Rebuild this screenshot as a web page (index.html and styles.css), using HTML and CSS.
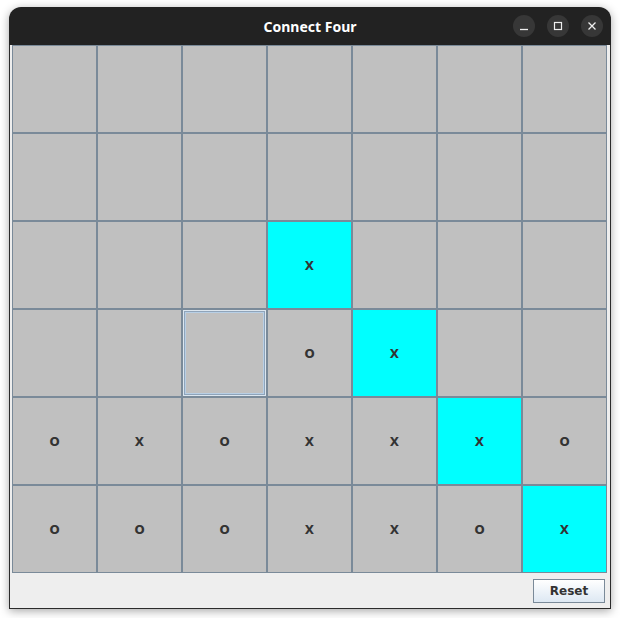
FILE: index.html
```html
<!DOCTYPE html>
<html>
<head>
<meta charset="utf-8">
<title>Connect Four</title>
<link rel="stylesheet" href="styles.css">
</head>
<body>
<div class="window">
  <div class="titlebar">
    <div class="title">Connect Four</div>
    <div class="controls">
      <div class="ctl"><svg width="10" height="10" viewBox="0 0 10 10"><path d="M1 8.5H9" stroke="#eee" stroke-width="1.3"/></svg></div>
      <div class="ctl"><svg width="10" height="10" viewBox="0 0 10 10"><rect x="1.5" y="1.5" width="7" height="7" fill="none" stroke="#eee" stroke-width="1.2"/></svg></div>
      <div class="ctl"><svg width="10" height="10" viewBox="0 0 10 10"><path d="M1.5 1.5L8.5 8.5M8.5 1.5L1.5 8.5" stroke="#eee" stroke-width="1.3"/></svg></div>
    </div>
  </div>
  <div class="content">
    <div class="board">
      <div class="cell"></div><div class="cell"></div><div class="cell"></div><div class="cell"></div><div class="cell"></div><div class="cell"></div><div class="cell"></div>
      <div class="cell"></div><div class="cell"></div><div class="cell"></div><div class="cell"></div><div class="cell"></div><div class="cell"></div><div class="cell"></div>
      <div class="cell"></div><div class="cell"></div><div class="cell"></div><div class="cell win">X</div><div class="cell"></div><div class="cell"></div><div class="cell"></div>
      <div class="cell"></div><div class="cell"></div><div class="cell focus"></div><div class="cell">O</div><div class="cell win">X</div><div class="cell"></div><div class="cell"></div>
      <div class="cell">O</div><div class="cell">X</div><div class="cell">O</div><div class="cell">X</div><div class="cell">X</div><div class="cell win">X</div><div class="cell">O</div>
      <div class="cell">O</div><div class="cell">O</div><div class="cell">O</div><div class="cell">X</div><div class="cell">X</div><div class="cell">O</div><div class="cell win">X</div>
    </div>
    <div class="footer">
      <button class="reset">Reset</button>
    </div>
  </div>
</div>
</body>
</html>
```
FILE: styles.css
```css
html, body {
  margin: 0;
  padding: 0;
  background: #ffffff;
}
body {
  width: 620px;
  height: 618px;
  overflow: hidden;
}
.window {
  margin: 7px 0 0 9px;
  width: 602px;
  border-radius: 12px 12px 0 0;
  box-shadow: 0 2px 10px rgba(0,0,0,0.35);
  background: #eeeeee;
}
.titlebar {
  height: 38px;
  background: #222222;
  border-radius: 12px 12px 0 0;
  display: flex;
  align-items: center;
  justify-content: center;
  position: relative;
}
.title {
  color: #ffffff;
  font-family: "Noto Sans", "DejaVu Sans", sans-serif;
  font-weight: bold;
  font-size: 14px;
  letter-spacing: 0;
}
.controls {
  position: absolute;
  right: 8px;
  top: 8px;
  display: flex;
  gap: 12px;
}
.ctl {
  width: 22px;
  height: 22px;
  border-radius: 50%;
  background: #373737;
  display: flex;
  align-items: center;
  justify-content: center;
}
.content {
  border: 1px solid #2b2b2b;
  border-top: none;
  background: #eeeeee;
  height: 563px;
}
.board {
  margin-left: 2px;
  display: grid;
  grid-template-columns: repeat(7, 85px);
  grid-template-rows: repeat(6, 88px);
}
.cell {
  box-sizing: border-box;
  border: 1px solid #7a8a99;
  background: #c0c0c0;
  display: flex;
  align-items: center;
  justify-content: center;
  padding-top: 2px;
  font-family: "DejaVu Sans", sans-serif;
  font-weight: bold;
  font-size: 12px;
  color: #333333;
}
.cell.win {
  background: #00ffff;
}
.cell.focus {
  box-shadow: inset 0 0 0 1px #dce6ef, inset 0 0 0 2px #8fa4ba, inset 0 0 0 3px #b8cfe5;
}
.footer {
  height: 35px;
  display: flex;
  justify-content: flex-end;
  align-items: flex-start;
  padding-right: 5px;
  box-sizing: border-box;
}
.reset {
  margin-top: 6px;
  width: 72px;
  height: 24px;
  border: 1px solid #7a8a99;
  background: linear-gradient(#ffffff, #dde8f3);
  font-family: "DejaVu Sans", sans-serif;
  font-weight: bold;
  font-size: 12px;
  color: #333333;
  padding: 0;
}
```
